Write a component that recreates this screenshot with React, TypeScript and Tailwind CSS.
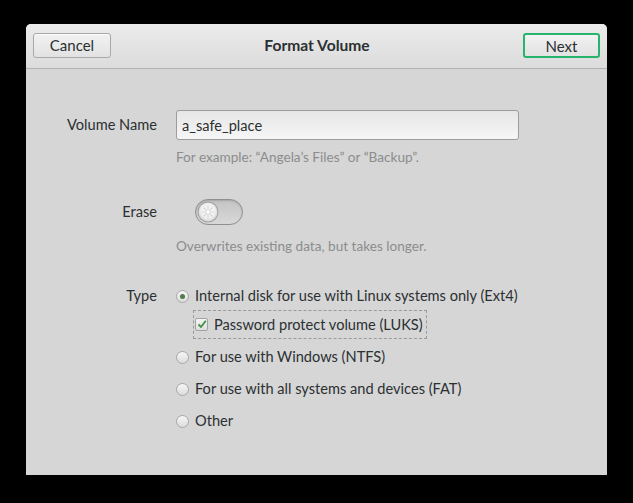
import { useState } from "react";

const font = { fontFamily: "Lato, 'Liberation Sans', sans-serif" };

export default function App() {
  const [name, setName] = useState("a_safe_place");
  const [type, setType] = useState("ext4");
  const [luks, setLuks] = useState(true);
  const [erase, setErase] = useState(false);

  return (
    <div className="w-[633px] h-[503px] bg-black pt-[24px] pl-[26px]" style={font}>
      <div className="w-[581px] h-[451px] rounded-t-[5px] bg-[#d6d6d6] flex flex-col text-[14.6px] text-[#2b3032] overflow-hidden">
        {/* HEADER BAR */}
        <div className="h-[45px] shrink-0 flex items-center justify-between px-[7px] pb-[1px] border-b border-[#b3b3b3] bg-gradient-to-b from-[#ebebeb] to-[#dcdcdc]">
          <button className="w-[78px] h-[25px] pb-[2px] rounded-[3px] border border-[#a8a8a8] bg-gradient-to-b from-[#f2f2f2] to-[#e2e2e2] text-[15px] text-[#2b3032] shadow-[inset_0_1px_0_rgba(255,255,255,0.8)]">
            Cancel
          </button>
          <div className="font-bold text-[15.6px] text-[#2b3032]">Format Volume</div>
          <button className="w-[77px] h-[25px] pb-[2px] rounded-[3px] border-2 border-[#27b56d] bg-gradient-to-b from-[#f2f2f2] to-[#e2e2e2] text-[15px] text-[#2b3032]">
            Next
          </button>
        </div>

        {/* BODY */}
        <div className="flex flex-col pt-[41px]">
          {/* VOLUME NAME */}
          <div className="flex items-center h-[30px]">
            <label className="w-[132px] text-right pr-[1px]">Volume Name</label>
            <input
              value={name}
              onChange={(e) => setName(e.target.value)}
              className="ml-[18px] w-[343px] h-[30px] rounded-[3px] border border-[#9c9c9c] bg-gradient-to-b from-[#e6e6e6] to-[#f6f6f6] px-[5px] text-[14.6px] text-[#2b3032] outline-none"
              style={font}
            />
          </div>
          <div className="ml-[150px] mt-[8px] h-[18px] leading-[18px] text-[13.6px] text-[#8b8d8d]">
            For example: “Angela’s Files” or “Backup”.
          </div>

          {/* ERASE */}
          <div className="flex items-center h-[26px] mt-[33px]">
            <label className="w-[132px] text-right pr-[1px]">Erase</label>
            <button
              onClick={() => setErase(!erase)}
              className="ml-[37px] w-[48px] h-[26px] rounded-full border border-[#8f8f8f] bg-gradient-to-b from-[#c4c4c4] to-[#d8d8d8] shadow-[inset_0_1px_2px_rgba(0,0,0,0.15)] flex items-center px-[1px]"
            >
              <svg width="22" height="22" viewBox="0 0 22 22">
                <defs>
                  <radialGradient id="knob" cx="50%" cy="45%" r="55%">
                    <stop offset="0%" stopColor="#ffffff" />
                    <stop offset="70%" stopColor="#efefef" />
                    <stop offset="100%" stopColor="#cfcfcf" />
                  </radialGradient>
                </defs>
                <circle cx="11" cy="11" r="10.5" fill="#a0a0a0" />
                <circle cx="11" cy="11" r="9.5" fill="url(#knob)" />
                <g stroke="#d6d6d6" strokeWidth="1.2" strokeLinecap="round">
                  <line x1="11" y1="5" x2="11" y2="9" />
                  <line x1="11" y1="13" x2="11" y2="17" />
                  <line x1="5" y1="11" x2="9" y2="11" />
                  <line x1="13" y1="11" x2="17" y2="11" />
                  <line x1="7" y1="7" x2="9.5" y2="9.5" />
                  <line x1="15" y1="15" x2="12.5" y2="12.5" />
                  <line x1="15" y1="7" x2="12.5" y2="9.5" />
                  <line x1="7" y1="15" x2="9.5" y2="12.5" />
                </g>
              </svg>
            </button>
          </div>
          <div className="ml-[150px] mt-[12px] h-[18px] leading-[18px] text-[13.6px] text-[#8b8d8d]">
            Overwrites existing data, but takes longer.
          </div>

          {/* TYPE */}
          <div className="flex mt-[30px]">
            <label className="w-[132px] text-right pr-[1px] h-[22px] leading-[22px]">Type</label>
            <div className="ml-[18px] flex flex-col">
              <Radio
                label="Internal disk for use with Linux systems only (Ext4)"
                checked={type === "ext4"}
                onClick={() => setType("ext4")}
              />
              <div className="mt-[3px] ml-[17px] w-[234px] h-[29px] border border-dashed border-[#9a9a9a] flex items-center pl-[1px] whitespace-nowrap">
                <button onClick={() => setLuks(!luks)} className="flex items-center gap-[6px] whitespace-nowrap">
                  <span className="w-[13px] h-[13px] shrink-0 rounded-[2px] border border-[#a3a3a3] bg-gradient-to-b from-[#f4f4f4] to-[#dedede] flex items-center justify-center">
                    {luks && (
                      <svg width="10" height="10" viewBox="0 0 10 10">
                        <path d="M1.5 5.5 L4 8 L8.8 1.8" fill="none" stroke="#3f8f3f" strokeWidth="1.8" />
                      </svg>
                    )}
                  </span>
                  <span>Password protect volume (LUKS)</span>
                </button>
              </div>
              <Radio
                className="mt-[7px]"
                label="For use with Windows (NTFS)"
                checked={type === "ntfs"}
                onClick={() => setType("ntfs")}
              />
              <Radio
                className="mt-[10px]"
                label="For use with all systems and devices (FAT)"
                checked={type === "fat"}
                onClick={() => setType("fat")}
              />
              <Radio
                className="mt-[10px]"
                label="Other"
                checked={type === "other"}
                onClick={() => setType("other")}
              />
            </div>
          </div>
        </div>
      </div>
    </div>
  );
}

/* Radio row */
function Radio({
  label,
  checked,
  onClick,
  className = "",
}: {
  label: string;
  checked: boolean;
  onClick: () => void;
  className?: string;
}) {
  return (
    <button onClick={onClick} className={"flex items-center h-[22px] gap-[6px] text-left whitespace-nowrap " + className}>
      <span className="w-[13px] h-[13px] shrink-0 rounded-full border border-[#a8a8a8] bg-gradient-to-b from-[#f6f6f6] to-[#dcdcdc] flex items-center justify-center">
        {checked && <span className="w-[5px] h-[5px] rounded-full bg-[#4f7d4a]" />}
      </span>
      <span>{label}</span>
    </button>
  );
}
